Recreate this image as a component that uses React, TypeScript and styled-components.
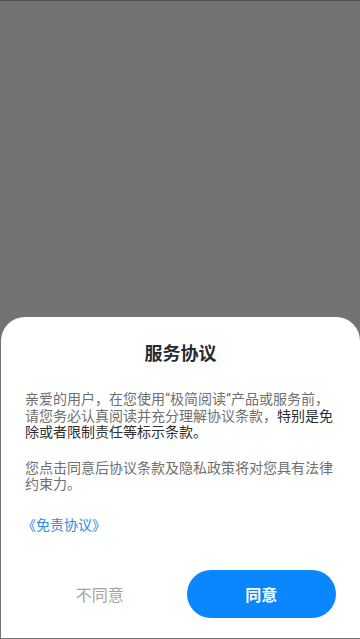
import React from "react";
import styled, { createGlobalStyle } from "styled-components";

const Global = createGlobalStyle`
  html, body { margin: 0; padding: 0; }
  body { font-family: Roboto, "Noto Sans CJK SC", sans-serif; }
  * { box-sizing: border-box; }
`;

const Page = styled.div`
  width: 360px;
  height: 639px;
  background: #737373;
  border-top: 1px solid #4e5054;
  display: flex;
  flex-direction: column;
  justify-content: flex-end;
  padding: 0 0 1px 1px;
  overflow: hidden;
`;

const Sheet = styled.div`
  background: #ffffff;
  border-radius: 24px 24px 0 0;
  height: 321px;
  padding: 24px 24px 20px 24px;
  display: flex;
  flex-direction: column;
`;

const Title = styled.h1`
  margin: 0;
  font-size: 18px;
  line-height: 26px;
  font-weight: 700;
  color: #262b31;
  text-align: center;
`;

const Paragraph = styled.p<{ $gap: number }>`
  margin: ${(p) => p.$gap}px 0 0 0;
  font-size: 14px;
  line-height: 16.6px;
  color: #6f6f6f;
`;

const Strong = styled.span`
  color: #2f2f2f;
`;

const Link = styled.a`
  display: block;
  margin-top: 24px;
  font-size: 14px;
  line-height: 17px;
  color: #2a8ce4;
  text-decoration: none;
  margin-left: -3px;
`;

const Actions = styled.div`
  margin-top: auto;
  display: grid;
  grid-template-columns: 1fr 1fr;
  gap: 12px;
`;

const Button = styled.button<{ $primary?: boolean }>`
  height: 48px;
  border: none;
  border-radius: 24px;
  font-family: inherit;
  font-size: 16px;
  font-weight: ${(p) => (p.$primary ? 700 : 400)};
  background: ${(p) => (p.$primary ? "#0a86ff" : "transparent")};
  color: ${(p) => (p.$primary ? "#ffffff" : "#a3a3a3")};
  padding: 0;
`;

export default function App() {
  return (
    <>
      <Global />
      <Page>
        <Sheet>
          <Title>服务协议</Title>
          <Paragraph $gap={24}>
            亲爱的用户，在您使用“极简阅读”产品或服务前，请您务必认真阅读并充分理解协议条款，
            <Strong>特别是免除或者限制责任等标示条款。</Strong>
          </Paragraph>
          <Paragraph $gap={19}>
            您点击同意后协议条款及隐私政策将对您具有法律约束力。
          </Paragraph>
          <Link href="#">《免责协议》</Link>
          <Actions>
            <Button>不同意</Button>
            <Button $primary>同意</Button>
          </Actions>
        </Sheet>
      </Page>
    </>
  );
}
